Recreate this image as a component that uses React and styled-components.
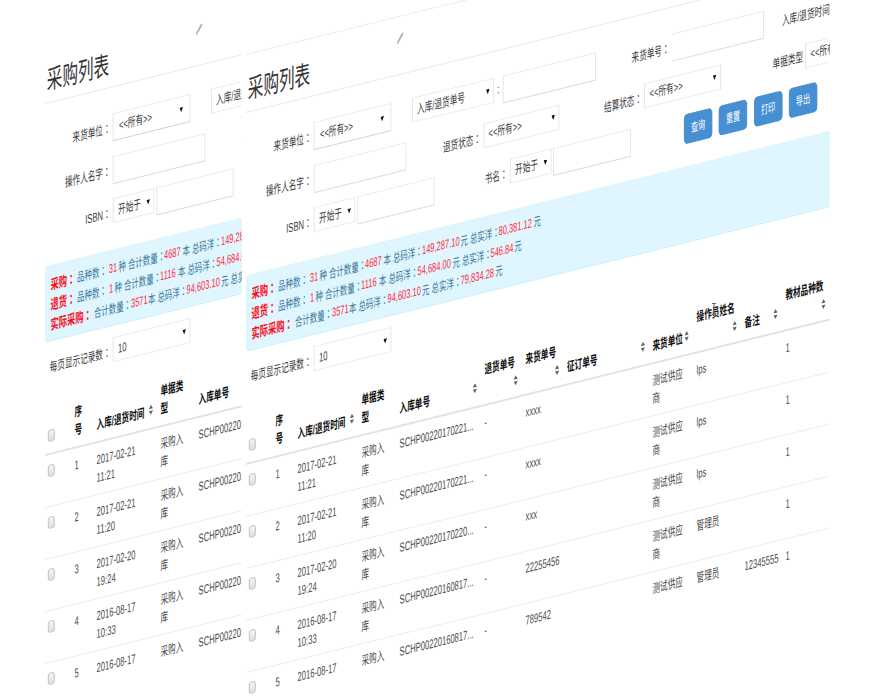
import React from "react";
import styled, { createGlobalStyle, css } from "styled-components";

const Global = createGlobalStyle`
  html, body { margin: 0; background: #fff; overflow: hidden; }
  * { box-sizing: border-box; }
`;

const Stage = styled.main`
  width: 895px;
  height: 700px;
  position: relative;
  overflow: hidden;
  display: flex;
  gap: 4px;
  padding-left: 45px;
  font: 12.7px/18px "Liberation Sans", "Noto Sans CJK SC", sans-serif;
  color: #3c3c3c;
`;

const Slot = styled.div`
  flex: none;
  width: ${(p) => p.$w}px;
  padding-top: ${(p) => p.$top}px;
`;

/* A tilted, horizontally squeezed sheet. */
const Sheet = styled.div`
  width: ${(p) => p.$w}px;
  height: 646px;
  overflow: hidden;
  transform-origin: 0 0;
  transform: matrix(0.6, -0.1485, 0, 1, 0, 0);
  border-top: 1px solid ${(p) => (p.$line ? "#ededed" : "transparent")};
`;

const Page = styled.div`
  width: 974px;
  white-space: nowrap;
`;

const Header = styled.header`
  height: 58px;
  display: flex;
  border-bottom: 1px solid #e9e9e9;
`;

const Title = styled.h1`
  margin: 0;
  padding: 16px 0 0 3px;
  width: 251px;
  font-size: 26px;
  line-height: 38px;
  font-weight: 400;
  color: #333;
`;

const PencilIcon = styled.svg`
  width: 12px;
  height: 12px;
  margin-top: 15px;
`;

const Form = styled.form`
  padding-top: 26px;
  display: grid;
  grid-auto-rows: 28px;
  row-gap: 14.5px;
  height: 162px;
`;

const Row = styled.div`
  display: flex;
  align-items: flex-start;
`;

const Label = styled.label`
  flex: none;
  width: ${(p) => p.$w}px;
  padding-right: ${(p) => (p.$pr === undefined ? 4 : p.$pr)}px;
  text-align: right;
  line-height: 27px;
`;

const LeadLabel = styled(Label)`
  padding: 0;
  margin-left: 30px;
  text-align: left;
`;

const boxed = css`
  flex: none;
  border: 1px solid #ececec;
  border-left-color: #d6d6d6;
  border-right-color: #d9d9d9;
  background: #fff;
`;

const Input = styled.div`
  ${boxed}
  width: ${(p) => p.$w}px;
  height: 28px;
  margin-left: ${(p) => p.$ml || 0}px;
  border-bottom-color: #dadada;
  ${(p) => p.$open && "border-left-color: transparent;"}
`;

const SelectBox = styled.div`
  ${boxed}
  width: ${(p) => p.$w}px;
  height: ${(p) => (p.$tall ? 28 : 25)}px;
  margin-left: ${(p) => p.$ml || 0}px;
  padding: 0 ${(p) => (p.$tall ? 11 : 6)}px 0 ${(p) => (p.$tall ? 9 : 7.5)}px;
  ${(p) => p.$tall && "border-bottom-color: #d2d2d2;"}
  display: flex;
  align-items: center;
  justify-content: space-between;
`;

const Arrow = styled.svg`
  width: 6px;
  height: 5px;
  margin-top: -1px;
`;

const Button = styled.button`
  flex: none;
  width: 47px;
  height: 30px;
  margin: -1px 0 0 ${(p) => p.$ml}px;
  padding: 0;
  border: 1px solid #3f89cc;
  border-radius: 5px;
  background: #458fd2;
  color: #fff;
  font: 12px/26px "Liberation Sans", "Noto Sans CJK SC", sans-serif;
`;

const Summary = styled.section`
  height: 77px;
  padding: 8px 0 0 8px;
  border: 1px solid #bdf1fb;
  border-top-color: #d9f7ff;
  border-left-color: #d2f5fd;
  border-right: 0;
  border-radius: 5px 0 0 5px;
  background: #e0f6ff;
  color: #39789a;
  font-size: 12.4px;
`;

const SummaryLine = styled.div`
  display: flex;
  height: 20px;
  line-height: 20px;
`;

const Part = styled.span`
  flex: none;
  width: ${(p) => p.$w}px;
  ${(p) => p.$red && "color: #ff2a3c; font-size: 12.5px; padding-left: 1px;"}
  ${(p) => p.$head && "color: #fb0d1b; font-size: 13.8px; font-weight: 700;"}
`;

const Colon = styled.span`
  font-family: "Noto Sans CJK TC", sans-serif;
`;

const PageSize = styled.div`
  display: flex;
  height: 38px;
  padding-top: 11px;
`;

const Table = styled.div`
  display: grid;
  grid-template-columns: 44px 37px 106.5px 63.5px 141.5px 68.5px 69px 142.5px 73.5px 80px 68px 80px;
`;

const HeadCell = styled.div`
  height: 75px;
  padding: 0 8px 7px 5px;
  border-bottom: 2px solid #e2e2e2;
  display: flex;
  flex-direction: ${(p) => (p.$stack ? "column" : "row")};
  align-items: flex-end;
  justify-content: ${(p) => (p.$stack ? "flex-end" : "space-between")};
  color: #111;
  font-weight: 700;
`;

const HeadText = styled.span`
  white-space: pre-line;
  ${(p) => p.$stack && "align-self: flex-start;"}
`;

const SortBox = styled.span`
  display: flex;
  align-items: center;
  height: ${(p) => (p.$stack ? 18 : 22)}px;
`;

const Cell = styled.div`
  height: 52px;
  padding: 8px 0 0 5px;
  border-bottom: 1px solid #ededed;
  white-space: pre-line;
  color: #4a4a4a;
`;

const Check = styled.span`
  display: block;
  width: 11px;
  height: 12px;
  margin: ${(p) => (p.$head ? "0 0 4px" : "2px 0 0")};
  border: 1px solid #b4b4b4;
  border-radius: 3px;
  background: linear-gradient(#f4f4f4, #dedede);
`;

const Beam = styled.svg`
  position: absolute;
  left: 711px;
  top: 302px;
  width: 6px;
  height: 14px;
`;

const Txt = ({ children }) =>
  children.split("：").map((s, i) => (
    <React.Fragment key={i}>
      {i > 0 && <Colon>：</Colon>}
      {s}
    </React.Fragment>
  ));

const Select = ({ children, ...rest }) => (
  <SelectBox {...rest}>
    <span>{children}</span>
    <Arrow viewBox="0 0 6 5"><path d="M0 0h6L3 5z" fill="#111" /></Arrow>
  </SelectBox>
);

const Sort = ({ stack }) => (
  <SortBox $stack={stack}>
    <svg width="7" height="10" viewBox="0 0 7 10">
      <path d="M0 4L3.5 0L7 4zM0 6L3.5 10L7 6z" fill="#666" />
    </svg>
  </SortBox>
);

/* [text, kind, width] where kind is h (heading), r (red figure) or empty */
const summary = [
  [["采购：", "h", 44.5], ["品种数：", "", 51.7], ["31", "r", 17.2], ["种 合计数量：", "", 75], ["4687", "r", 31.7], ["本 总码洋：", "", 63.3], ["149,287.10", "r", 65], ["元 总实洋：", "", 62.5], ["80,381.12", "r", 59.2], ["元", "", 20]],
  [["退货：", "h", 44.5], ["品种数：", "", 52.2], ["1", "r", 10], ["种 合计数量：", "", 75], ["1116", "r", 30.8], ["本 总码洋：", "", 63.3], ["54,684.00", "r", 59.2], ["元 总实洋：", "", 62.5], ["546.84", "r", 40.8], ["元", "", 20]],
  [["实际采购：", "h", 72.5], ["合计数量：", "", 60.8], ["3571", "r", 29.2], ["本 总码洋：", "", 63.3], ["94,603.10", "r", 58.7], ["元 总实洋：", "", 63.3], ["79,834.28", "r", 58.8], ["元", "", 20]],
];

/* [text, sort marker: "" none, "side" beside, "under" below] */
const heads = [
  ["序\n号", ""], ["入库/退货时间", "side"], ["单据类\n型", ""], ["入库单号", "side"],
  ["退货单号", "under"], ["来货单号", "under"], ["征订单号", "side"], ["来货单位", "side"],
  ["操作员姓名", "under"], ["备注", "side"], ["教材品种数", "under"],
];

const rows = [
  ["2017-02-21\n11:21", "SCHP00220170221...", "xxxx", "lps", ""],
  ["2017-02-21\n11:20", "SCHP00220170221...", "xxxx", "lps", ""],
  ["2017-02-20\n19:24", "SCHP00220170220...", "xxx", "lps", ""],
  ["2016-08-17\n10:33", "SCHP00220160817...", "22255456", "管理员", ""],
  ["2016-08-17", "SCHP00220160817...", "789542", "管理员", "12345555"],
];

const PurchasePage = () => (
  <Page>
    <Header>
      <Title>采购列表</Title>
      <PencilIcon viewBox="0 0 12 12">
        <path d="M0 12L1 9L9 1L12 2L11 4L3 11z" fill="#c6c6c6" />
        <path d="M2 10L10 2" stroke="#999" strokeWidth=".7" />
      </PencilIcon>
    </Header>
    <Form>
      <Row>
        <Label $w={113.3}><Txt>来货单位：</Txt></Label>
        <Select $w={129} $tall>&lt;&lt;所有&gt;&gt;</Select>
        <Select $w={136} $ml={34.4}>入库/退货单号</Select>
        <Label $w={15.6} $pr={6}>:</Label>
        <Input $w={155} />
        <Label $w={126.7}><Txt>来货单号：</Txt></Label>
        <Input $w={153.3} $open />
        <LeadLabel $w={90}><Txt>入库/退货时间：</Txt></LeadLabel>
      </Row>
      <Row>
        <Label $w={113.3}><Txt>操作人名字：</Txt></Label>
        <Input $w={154.2} />
        <Label $w={128.3}><Txt>退货状态：</Txt></Label>
        <Select $w={126.7}>&lt;&lt;所有&gt;&gt;</Select>
        <Label $w={141.7}><Txt>结算状态：</Txt></Label>
        <Select $w={126.7}>&lt;&lt;所有&gt;&gt;</Select>
        <Label $w={141.6}>单据类型</Label>
        <Select $w={126.7}>&lt;&lt;所有&gt;&gt;</Select>
      </Row>
      <Row>
        <Label $w={113.3}><Txt>ISBN：</Txt></Label>
        <Select $w={69.2}>开始于</Select>
        <Input $w={128.4} $ml={3.3} />
        <Label $w={125.8}><Txt>书名：</Txt></Label>
        <Select $w={69}>开始于</Select>
        <Input $w={128.4} $ml={3.5} />
        <Button type="button" $ml={89.2}>查询</Button>
        <Button type="button" $ml={11.3}>重置</Button>
        <Button type="button" $ml={11.3}>打印</Button>
        <Button type="button" $ml={11.3}>导出</Button>
      </Row>
    </Form>
    <Summary>
      {summary.map((line, i) => (
        <SummaryLine key={i}>
          {line.map(([text, kind, w], j) => (
            <Part key={j} $w={w} $red={kind === "r"} $head={kind === "h"}><Txt>{text}</Txt></Part>
          ))}
        </SummaryLine>
      ))}
    </Summary>
    <PageSize>
      <Label $w={113.3}><Txt>每页显示记录数：</Txt></Label>
      <Select $w={129}>10</Select>
    </PageSize>
    <Table>
      <HeadCell><Check $head /></HeadCell>
      {heads.map(([text, sort]) => (
        <HeadCell key={text} $stack={sort === "under"}>
          <HeadText $stack={sort === "under"}>{text}</HeadText>
          {sort && <Sort stack={sort === "under"} />}
        </HeadCell>
      ))}
      {rows.map(([time, code, from, who, note], i) => (
        <React.Fragment key={i}>
          <Cell><Check /></Cell>
          <Cell>{i + 1}</Cell>
          <Cell>{time}</Cell>
          <Cell>{i < 4 ? "采购入\n库" : "采购入"}</Cell>
          <Cell>{code}</Cell>
          <Cell>-</Cell>
          <Cell>{from}</Cell>
          <Cell />
          <Cell>{i < 4 ? "测试供应\n商" : "测试供应"}</Cell>
          <Cell>{who}</Cell>
          <Cell>{note}</Cell>
          <Cell>1</Cell>
        </React.Fragment>
      ))}
    </Table>
  </Page>
);

export default function App() {
  return (
    <>
      <Global />
      <Stage>
        <Slot $w={197} $top={45}>
          <Sheet $w={328.3}><PurchasePage /></Sheet>
        </Slot>
        <Slot $w={584} $top={54}>
          <Sheet $w={973.3} $line><PurchasePage /></Sheet>
        </Slot>
        <Beam viewBox="0 0 6 14">
          <path d="M1 1.5h4M3 1.5v11M1 12.5h4" stroke="#666" strokeWidth="1" fill="none" />
        </Beam>
      </Stage>
    </>
  );
}
